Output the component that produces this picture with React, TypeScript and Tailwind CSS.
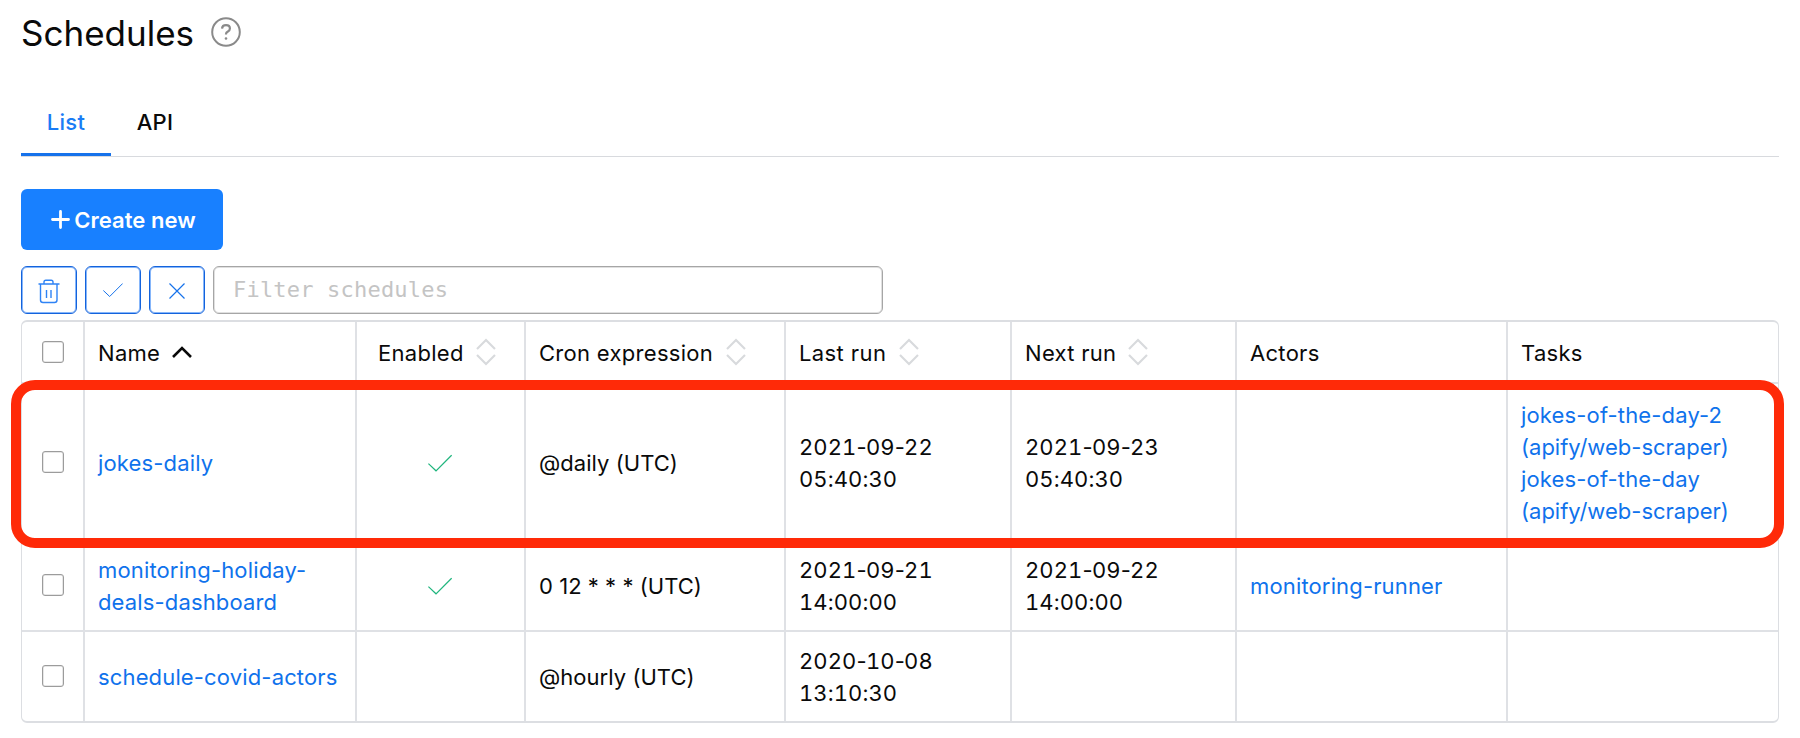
import React from "react";

const COLS = "grid grid-cols-[63px_272px_169px_260px_226px_225px_271px_1fr]";

function Chevrons() {
  return (
    <svg width="20" height="28" viewBox="0 0 20 28" fill="none" stroke="#d8dadd" strokeWidth="2.2" className="relative -top-px shrink-0">
      <path d="M1 11 10 2 19 11M1 17 10 26 19 17" />
    </svg>
  );
}

function Tick({ size, color }: { size: number; color: string }) {
  return (
    <svg width={size} height={size} viewBox="0 0 24 24" fill="none" stroke={color} strokeWidth="1.2">
      <path d="M.4 12.600 8 19.800 23.600 4.200" />
    </svg>
  );
}

function Checkbox() {
  return <span className="block h-[22px] w-[22px] rounded-[3px] border border-[#9c9c9c] bg-white shadow-[inset_0_0_0_0.5px_#cfcfcf]" />;
}

function Cell({ children, className = "pt-0.5 pl-[13px]" }: { children?: React.ReactNode; className?: string }) {
  return <div className={`flex items-center border-r-2 border-[#dfe1e5] ${className}`}>{children}</div>;
}

type Schedule = {
  name: string[];
  enabled: boolean;
  cron: string;
  last: string[];
  next: string[];
  actors: string[];
  tasks: string[];
  row: string;
};

const schedules: Schedule[] = [
  {
    name: ["jokes-daily"],
    enabled: true,
    cron: "@daily (UTC)",
    last: ["2021-09-22", "05:40:30"],
    next: ["2021-09-23", "05:40:30"],
    actors: [],
    tasks: ["jokes-of-the-day-2", "(apify/web-scraper)", "jokes-of-the-day", "(apify/web-scraper)"],
    row: "h-[157px]",
  },
  {
    name: ["monitoring-holiday-", "deals-dashboard"],
    enabled: true,
    cron: "0 12 * * * (UTC)",
    last: ["2021-09-21", "14:00:00"],
    next: ["2021-09-22", "14:00:00"],
    actors: ["monitoring-runner"],
    tasks: [],
    row: "h-[91px] [&>*]:pb-px",
  },
  {
    name: ["schedule-covid-actors"],
    enabled: false,
    cron: "@hourly (UTC)",
    last: ["2020-10-08", "13:10:30"],
    next: [],
    actors: [],
    tasks: [],
    row: "h-[89px] [&>*]:pb-px",
  },
];

function Links({ items }: { items: string[] }) {
  return (
    <div className="whitespace-nowrap text-[#0f72ec]">
      {items.map((t, i) => (
        <a key={i} className={`block ${t.startsWith("(") ? "tracking-[0px]" : "tracking-[0.15px]"}`}>{t}</a>
      ))}
    </div>
  );
}

/* Digits keep a fixed width; the hyphens stay proportional. */
function Stamp({ items }: { items: string[] }) {
  return (
    <div className="whitespace-nowrap tabular-nums tracking-[0.1px]">
      {items.map((t, i) => (
        <div key={i}>
          {t.split("-").map((part, j) => (
            <React.Fragment key={j}>
              {j > 0 && <span className="normal-nums tracking-[-0.7px]">-</span>}
              {part}
            </React.Fragment>
          ))}
        </div>
      ))}
    </div>
  );
}

const TOOL = "flex w-14 items-center justify-center rounded-[6px] border border-[#1463dc] shadow-[inset_0_0_0_1px_#86b6fa]";

export default function App() {
  return (
    <div className="h-[738px] overflow-hidden bg-white px-[21px] font-['Inter',sans-serif] text-[22px] leading-8 tracking-[0.3px] text-[#0a0a0a]">
      <header className="flex h-[66px] items-center gap-[17px]">
        <h1 className="text-[35px] leading-10 tracking-[0px]">Schedules</h1>
        <svg width="30" height="30" viewBox="0 0 30 30" fill="none" stroke="#8a8a8a" strokeWidth="2" className="relative -top-px">
          <circle cx="15" cy="15" r="13.8" />
          <path d="M11 11.600c.2-2.200 1.800-3.400 4-3.400s3.900 1.200 3.900 3.200c0 1.500-.8 2.300-2 3.100-1.300.8-1.900 1.400-1.900 2.400v.7" strokeWidth="2.200" />
          <circle cx="15" cy="21.500" r="1.300" fill="#8a8a8a" stroke="none" />
        </svg>
      </header>

      <nav className="flex h-[91px] items-end border-b border-[#d8dade] font-medium">
        <div className="flex h-[70px] w-[90px] items-center justify-center border-b-[3px] border-[#1672eb] pt-[5px] text-[#1a7cf5]">List</div>
        <div className="flex h-[70px] w-[88px] items-center justify-center border-b-[3px] border-transparent pt-[5px]">API</div>
      </nav>

      <button className="mt-8 flex h-[61px] w-[202px] items-center justify-center gap-1 rounded-[6px] bg-[#1880ff] pl-[3px] font-semibold tracking-[0.05px] text-white">
        <svg width="19" height="19" viewBox="0 0 19 19" stroke="currentColor" strokeWidth="2.800" strokeLinecap="round">
          <path d="M9.500 1.500v16M1.500 9.500h16" />
        </svg>
        Create new
      </button>

      <div className="mt-4 flex h-12 gap-2">
        <button className={TOOL}>
          <svg width="22" height="26" viewBox="0 0 22 26" fill="none" stroke="#2f83f5" strokeWidth="1.400" className="relative top-px">
            <path d="M.5 6h21M6 5.700V4Q6 2.200 7.800 2.200h5.400Q15 2.200 15 4v1.700M2.500 6v16q0 2.500 2.500 2.500h11.500q2.500 0 2.500-2.500V6M8.500 12v8M13 12v8" />
          </svg>
        </button>
        <button className={TOOL}>
          <Tick size={20} color="#1672eb" />
        </button>
        <button className={TOOL}>
          <svg width="16" height="16" viewBox="0 0 16 16" stroke="#1672eb" strokeWidth="1.200" className="relative top-px">
            <path d="M.5.5l15 15M15.500.5l-15 15" />
          </svg>
        </button>
        <div className="flex w-[670px] items-center rounded-[6px] border border-[#a6a6a6] pl-[19px] font-['DejaVu_Sans_Mono',monospace] tracking-[0.2px] text-[#c4c4c4] shadow-[inset_0_0_0_1px_#e0e0e0]">
          Filter schedules
        </div>
      </div>

      <div className="relative mt-1.5 w-[1758px]">
        <div className="overflow-hidden rounded-[6px] border-x border-y-2 border-[#dcdee2]">
          <div className={`${COLS} h-[62px] border-b-2 border-[#dfe1e5] [&>*:last-child]:border-r-0`}>
            <Cell className="pl-5"><Checkbox /></Cell>
            <Cell className="gap-3 pt-0.5 pl-[13px]">
              Name
              <svg width="20" height="12" viewBox="0 0 20 12" fill="none" stroke="#0a0a0a" strokeWidth="2.600" className="relative -top-px">
                <path d="M1 11 10 2 19 11" />
              </svg>
            </Cell>
            <Cell className="gap-3 pt-0.5 pl-[21px]">Enabled<Chevrons /></Cell>
            <Cell className="gap-[13px] pt-0.5 pl-[13px]">Cron expression<Chevrons /></Cell>
            <Cell className="gap-[13px] pt-0.5 pl-[13px] tracking-[0.4px]">Last run<Chevrons /></Cell>
            <Cell className="gap-3 pt-0.5 pl-[13px]">Next run<Chevrons /></Cell>
            <Cell>Actors</Cell>
            <Cell>Tasks</Cell>
          </div>
          {schedules.map((s) => (
            <div key={s.cron} className={`${COLS} ${s.row} border-b-2 border-[#dfe1e5] last:border-b-0 [&>*:last-child]:border-r-0`}>
              <Cell className="pl-5"><Checkbox /></Cell>
              <Cell><Links items={s.name} /></Cell>
              <Cell className="justify-center pt-0.5 pr-[2px]">{s.enabled && <Tick size={24} color="#1fb57d" />}</Cell>
              <Cell className="pt-0.5 pl-[13px] tracking-[0.04px]">{s.cron}</Cell>
              <Cell><Stamp items={s.last} /></Cell>
              <Cell><Stamp items={s.next} /></Cell>
              <Cell><Links items={s.actors} /></Cell>
              <Cell><Links items={s.tasks} /></Cell>
            </div>
          ))}
        </div>
        <div className="pointer-events-none absolute -left-2.5 top-[60px] h-[168px] w-[1773px] rounded-[24px] border-[10px] border-[#ff2a08]" />
      </div>
    </div>
  );
}
